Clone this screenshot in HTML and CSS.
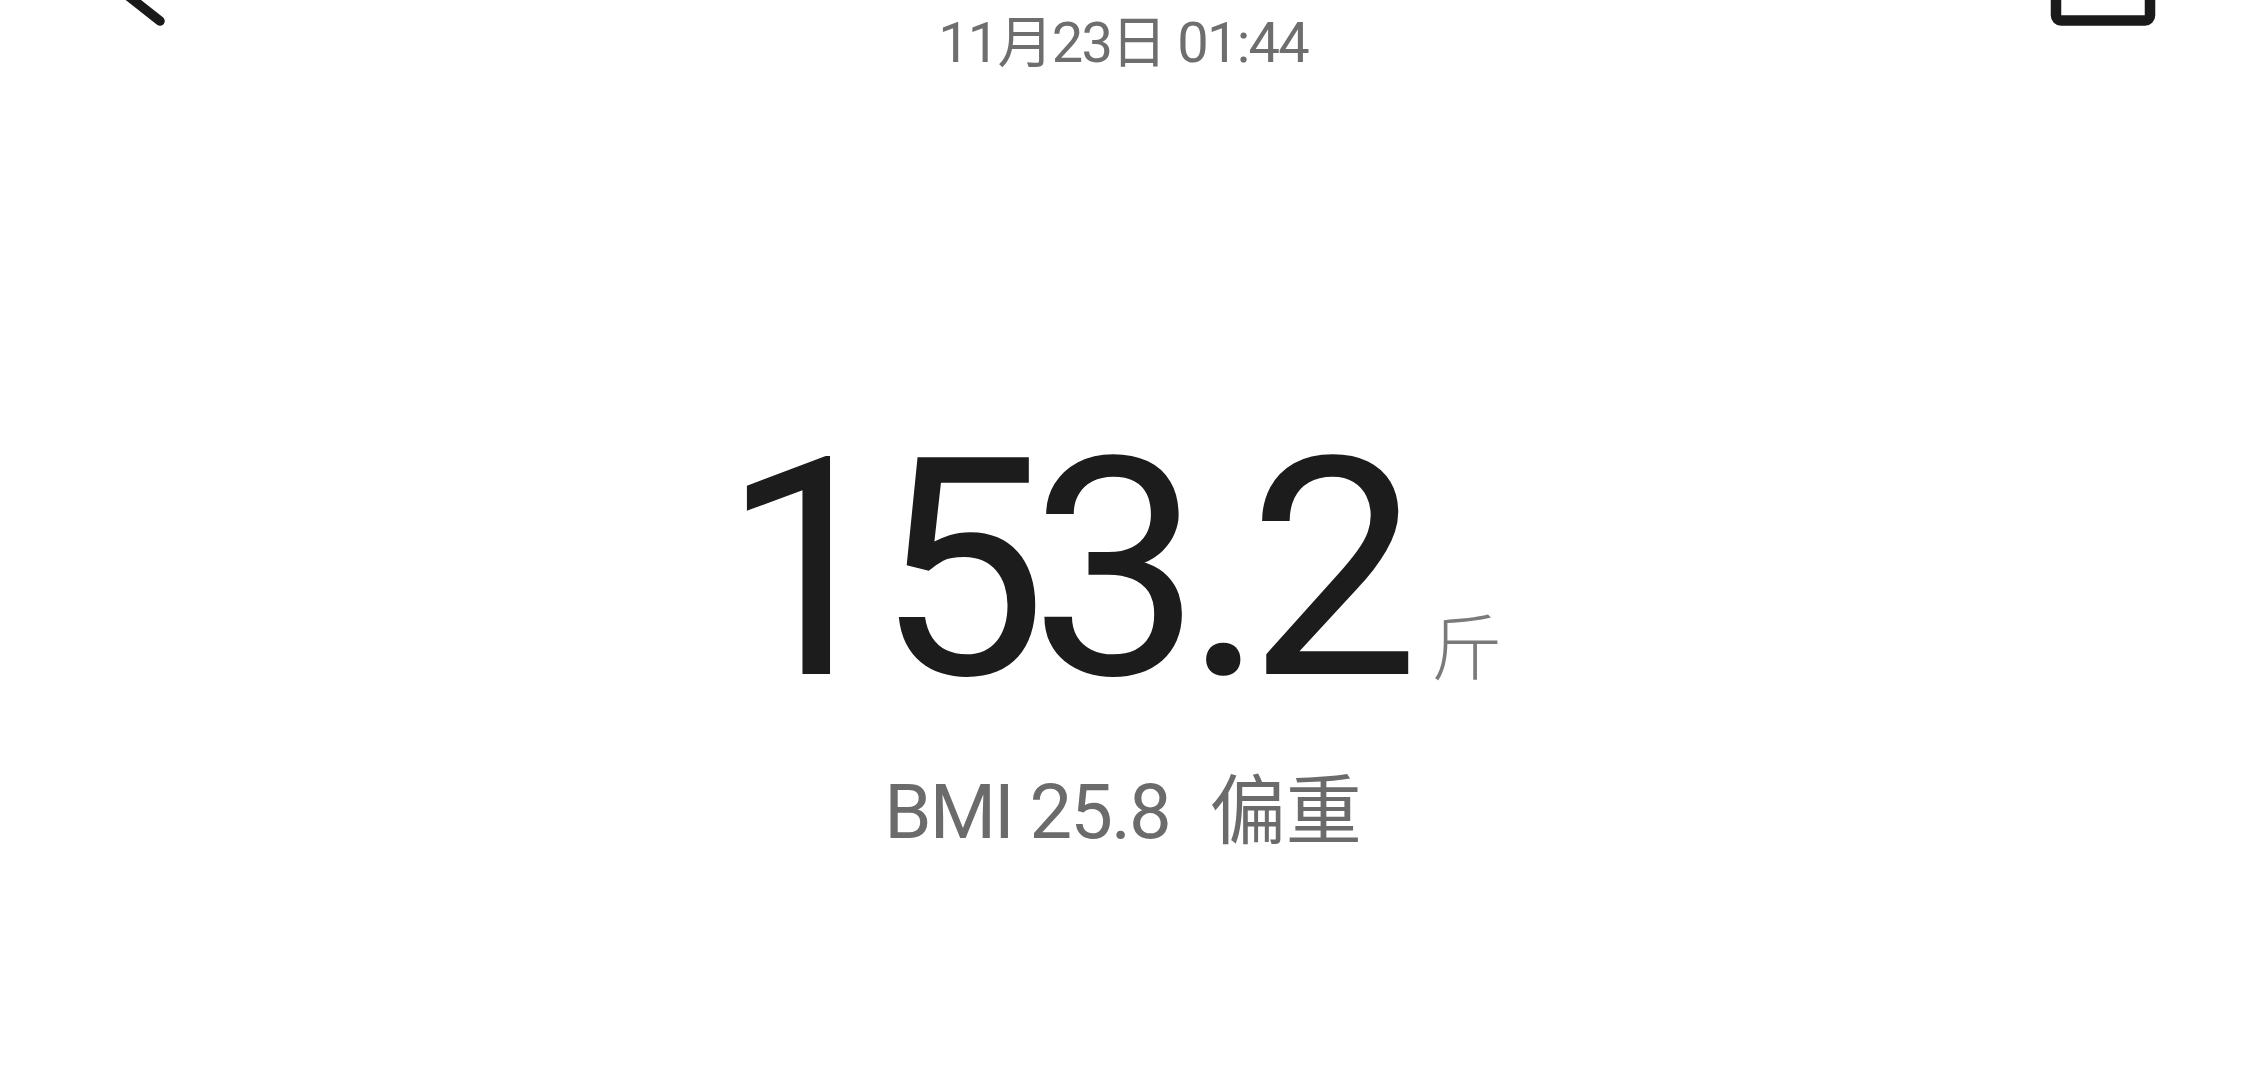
FILE: index.html
```html
<!DOCTYPE html>
<html lang="zh-CN">
<head>
    <meta charset="UTF-8">
    <meta name="viewport" content="width=device-width, initial-scale=1.0">
    <title>体重记录</title>
    <link rel="stylesheet" href="styles.css">
</head>
<body>

    <div class="topbar">
        <div class="topbar-left">
            <svg class="icon-back" width="50" height="30" viewBox="0 0 50 30">
                <path d="M-12 -20 L40 21" stroke="#1a1a1a" stroke-width="9.5" stroke-linecap="round" fill="none"/>
            </svg>
        </div>
        <div class="date">11月23日 01:44</div>
        <div class="topbar-right">
            <svg class="icon-box" width="110" height="30" viewBox="0 0 110 30">
                <rect x="6" y="-40" width="94" height="60.5" rx="5" stroke="#1a1a1a" stroke-width="10.5" fill="none"/>
            </svg>
        </div>
    </div>

    <div class="reading">
        <span class="weight">153.2</span><span class="unit">斤</span>
    </div>

    <div class="bmi">
        <span>BMI 25.8</span><span class="bmi-level">偏重</span>
    </div>

</body>
</html>
```

FILE: styles.css
```css
body {
    margin: 0;
    width: 2246px;
    height: 1080px;
    overflow: hidden;
    background-color: #fff;
    font-family: Roboto, "Noto Sans CJK SC", sans-serif;
}
.topbar {
    display: grid;
    grid-template-columns: 1fr auto 1fr;
    align-items: start;
}
.topbar-left {
    padding-left: 120px;
}
.topbar-right {
    justify-self: end;
    padding-right: 86px;
}
.topbar svg {
    display: block;
}
.date {
    padding-top: 15px;
    font-size: 56px;
    line-height: 56px;
    color: #6e6e6e;
    letter-spacing: -1.8px;
}
.reading {
    margin-top: 346px;
    padding-right: 22px;
    text-align: center;
    font-size: 305px;
    line-height: 1;
    color: #1c1c1c;
}
.reading .weight {
    letter-spacing: -17px;
}
.reading .unit {
    margin-left: 28px;
    font-size: 72px;
    font-family: "Noto Sans CJK SC", sans-serif;
    font-weight: 300;
    letter-spacing: 0;
    color: #7a7a7a;
}
.bmi {
    margin-top: 52px;
    text-align: center;
    font-size: 76px;
    line-height: 1;
    color: #6b6b6b;
    letter-spacing: -2px;
}
.bmi .bmi-level {
    margin-left: 40px;
    letter-spacing: 0;
}
```
